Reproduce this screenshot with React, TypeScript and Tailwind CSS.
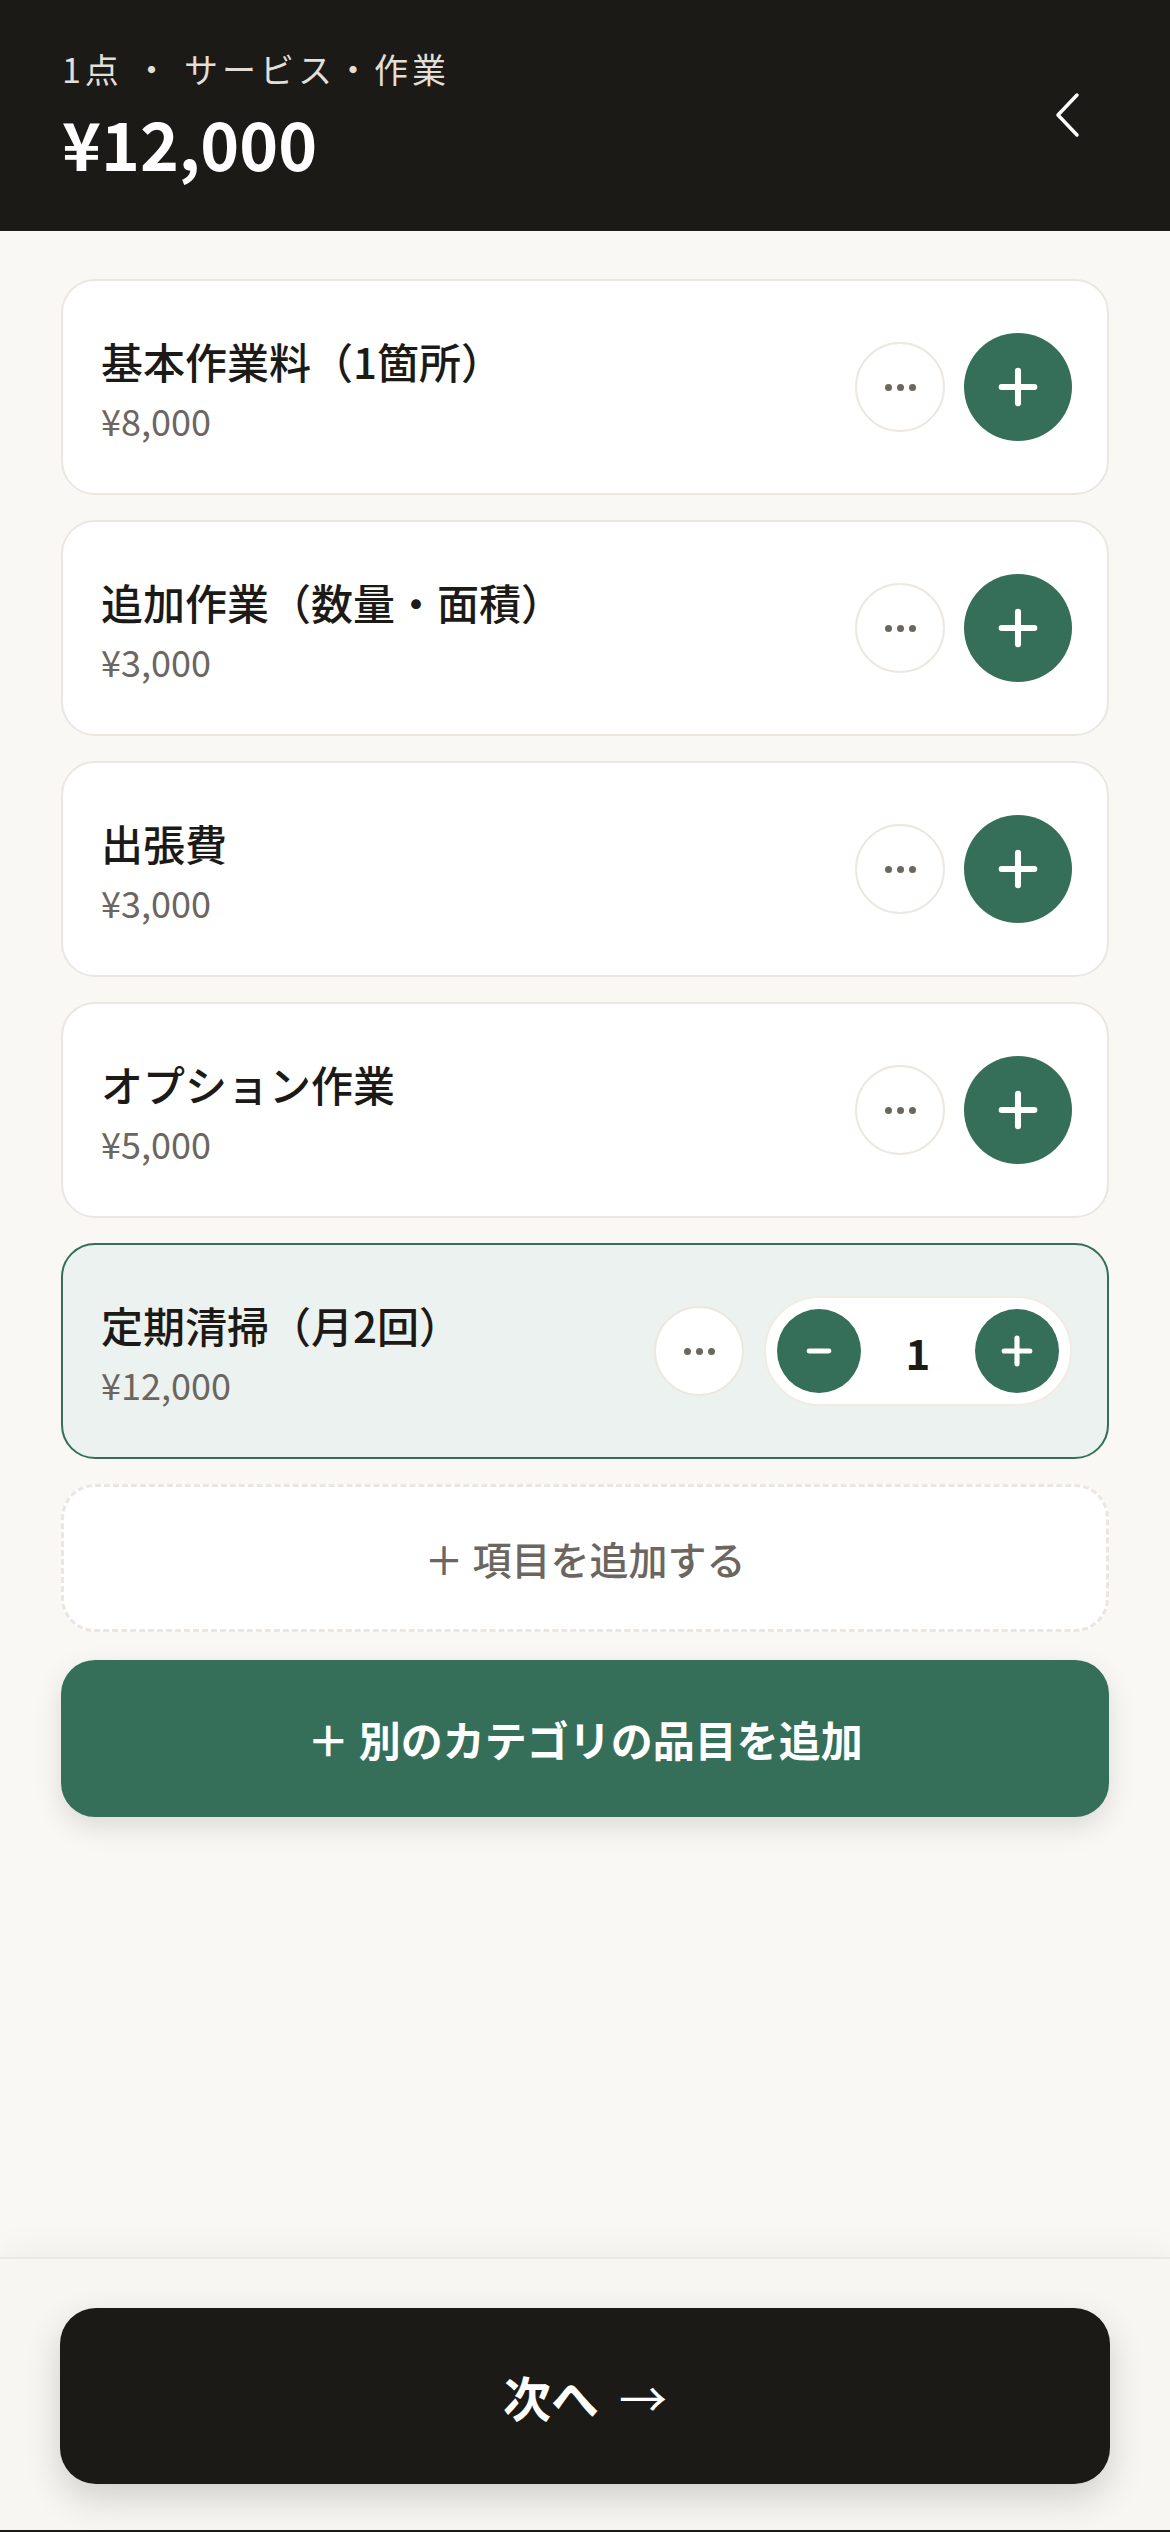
import { Minus, Plus } from 'lucide-react';

const font = { fontFamily: '"Noto Sans CJK JP", "Noto Sans", sans-serif' };

type Item = { name: string; price: string; qty: number };

const items: Item[] = [
  { name: '基本作業料（1箇所）', price: '¥8,000', qty: 0 },
  { name: '追加作業（数量・面積）', price: '¥3,000', qty: 0 },
  { name: '出張費', price: '¥3,000', qty: 0 },
  { name: 'オプション作業', price: '¥5,000', qty: 0 },
  { name: '定期清掃（月2回）', price: '¥12,000', qty: 1 },
];

function MoreButton() {
  return (
    <button className="w-[90px] h-[90px] rounded-full border-2 border-[#ece8e1] bg-white flex items-center justify-center gap-[5px] shrink-0">
      <span className="w-[7px] h-[7px] rounded-full bg-[#6b665f]" />
      <span className="w-[7px] h-[7px] rounded-full bg-[#6b665f]" />
      <span className="w-[7px] h-[7px] rounded-full bg-[#6b665f]" />
    </button>
  );
}

function ItemCard({ item }: { item: Item }) {
  const selected = item.qty > 0;
  return (
    <div
      className={
        selected
          ? 'h-[216px] rounded-[34px] border-2 border-[#366f59] bg-[#ecf2ef] flex items-center pl-[38px] pr-[35px]'
          : 'h-[216px] rounded-[34px] border-2 border-[#ebe7e0] bg-white flex items-center pl-[38px] pr-[35px]'
      }
    >
      <div className="flex-1 flex flex-col pt-[4px]">
        <span className="text-[42px] leading-[50px] font-medium text-[#1c1a17]">{item.name}</span>
        <span className="text-[36px] leading-[44px] mt-[12px] text-[#6b665f]">{item.price}</span>
      </div>
      {selected ? (
        <div className="flex items-center gap-[20px]">
          <MoreButton />
          <div className="h-[110px] rounded-full bg-white border-2 border-[#f0ece5] flex items-center px-[11px]">
            <button className="w-[84px] h-[84px] rounded-full bg-[#366f59] flex items-center justify-center">
              <Minus size={34} strokeWidth={3.5} color="white" />
            </button>
            <span className="w-[114px] text-center text-[42px] font-bold text-[#1c1a17]">{item.qty}</span>
            <button className="w-[84px] h-[84px] rounded-full bg-[#366f59] flex items-center justify-center">
              <Plus size={44} strokeWidth={2.8} color="white" />
            </button>
          </div>
        </div>
      ) : (
        <div className="flex items-center gap-[19px]">
          <MoreButton />
          <button className="w-[108px] h-[108px] rounded-full bg-[#366f59] flex items-center justify-center">
            <Plus size={56} strokeWidth={2.6} color="white" />
          </button>
        </div>
      )}
    </div>
  );
}

export default function App() {
  return (
    <div style={font} className="min-h-screen flex flex-col bg-[#f9f8f4]">
      <header className="h-[231px] bg-[#1c1a17] flex items-start justify-between pl-[62px] pr-[88px] pt-[48px]">
        <div className="flex flex-col">
          <span className="text-[34px] leading-[42px] tracking-[4px] text-[#e2dfd8]">1点 ・ サービス・作業</span>
          <span className="text-[66px] leading-[80px] font-bold text-white mt-[12px]">¥12,000</span>
        </div>
        <svg width="30" height="46" viewBox="0 0 30 46" className="mt-[44px]" fill="none">
          <polyline points="25,3 6,23 25,43" stroke="white" strokeWidth="3.5" strokeLinecap="round" strokeLinejoin="round" />
        </svg>
      </header>

      <main className="flex-1 px-[61px] pt-[48px] flex flex-col gap-[25px]">
        {items.map((item) => (
          <ItemCard key={item.name} item={item} />
        ))}
        <button className="h-[148px] rounded-[34px] border-[3px] border-dashed border-[#ebe7e0] bg-white text-[39px] font-medium text-[#6b665f]">
          ＋ 項目を追加する
        </button>
        <button className="mt-[3px] h-[157px] rounded-[34px] bg-[#366f59] text-[42px] font-bold text-white shadow-[0_10px_28px_rgba(0,0,0,0.12)]">
          ＋ 別のカテゴリの品目を追加
        </button>
      </main>

      <footer className="h-[275px] bg-[#f7f6f2] border-t-2 border-[#ebe9e3] shadow-[0_-10px_30px_rgba(0,0,0,0.04)] px-[60px] pt-[49px] border-b-2 border-b-[#1c1a17]">
        <button className="w-full h-[176px] rounded-[36px] bg-[#1c1a17] text-white text-[48px] shadow-[0_14px_36px_rgba(0,0,0,0.16)] flex items-center justify-center gap-[20px]">
          <span className="font-bold">次へ</span>
          <span className="font-normal">→</span>
        </button>
      </footer>
    </div>
  );
}
